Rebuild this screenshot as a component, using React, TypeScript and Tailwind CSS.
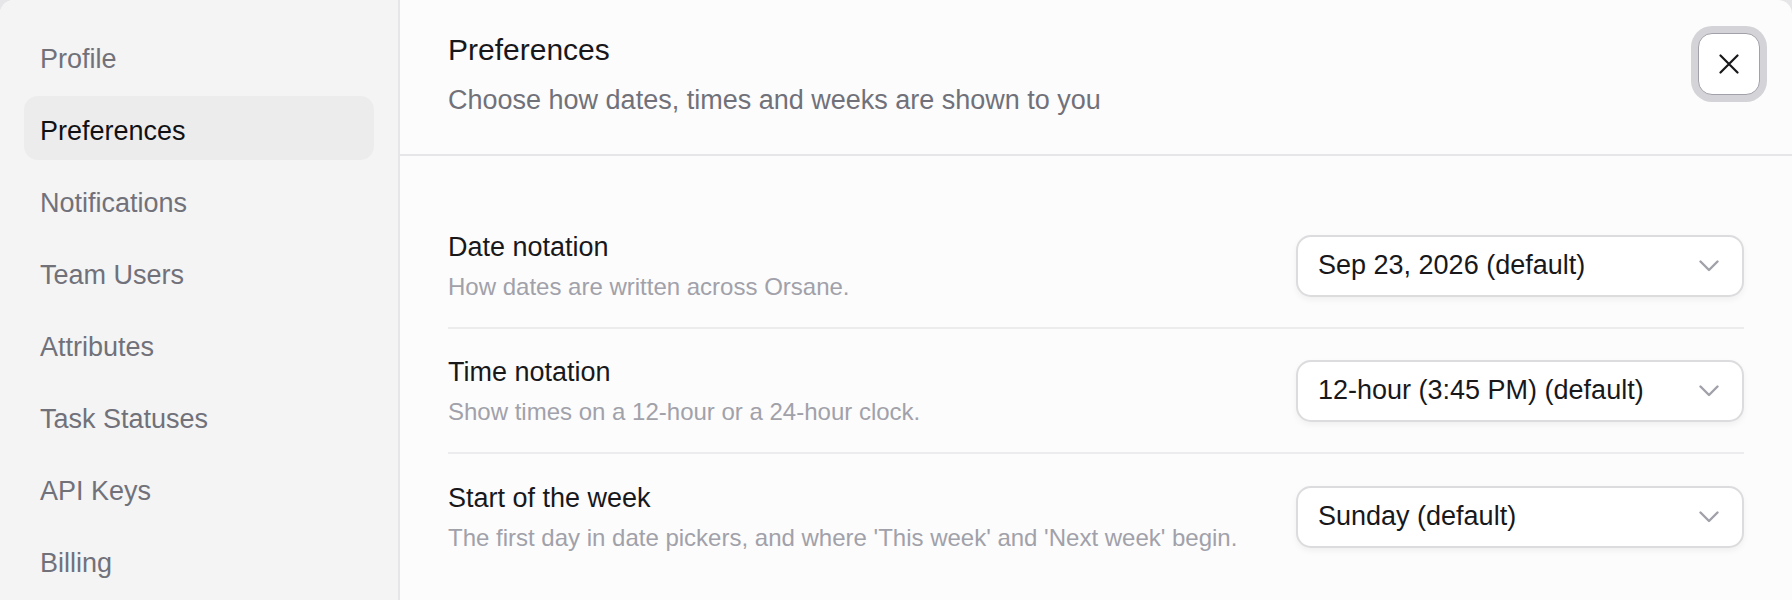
import { useState } from "react";

const navItems = [
  "Profile",
  "Preferences",
  "Notifications",
  "Team Users",
  "Attributes",
  "Task Statuses",
  "API Keys",
  "Billing",
];

const settings = [
  {
    title: "Date notation",
    description: "How dates are written across Orsane.",
    value: "Sep 23, 2026 (default)",
  },
  {
    title: "Time notation",
    description: "Show times on a 12-hour or a 24-hour clock.",
    value: "12-hour (3:45 PM) (default)",
  },
  {
    title: "Start of the week",
    description:
      "The first day in date pickers, and where 'This week' and 'Next week' begin.",
    value: "Sunday (default)",
  },
];

const Chevron = () => (
  <svg width="20" height="12" viewBox="0 0 20 12" fill="none">
    <polyline
      points="1.5,1.5 10,10 18.5,1.5"
      stroke="#a1a1aa"
      strokeWidth="2.4"
      strokeLinecap="round"
      strokeLinejoin="round"
    />
  </svg>
);

const CloseIcon = () => (
  <svg width="20" height="20" viewBox="0 0 20 20" fill="none">
    <path
      d="M1.5 1.5 18.5 18.5M18.5 1.5 1.5 18.5"
      stroke="#18181b"
      strokeWidth="2.2"
      strokeLinecap="round"
    />
  </svg>
);

const SelectBox = ({ value }: { value: string }) => (
  <button
    type="button"
    className="flex h-[62px] w-[448px] shrink-0 items-center justify-between rounded-[15px] border-2 border-[#dcdcdf] bg-white pl-5 pr-[23px] text-[27px] text-[#18181b] shadow-[0_3px_6px_rgba(0,0,0,0.05)]"
  >
    <span>{value}</span>
    <Chevron />
  </button>
);

export default function App() {
  const [active, setActive] = useState("Preferences");

  return (
    <div className="min-h-screen bg-[#e6e6e8] font-['Liberation_Sans',Arial,sans-serif]">
      <div className="flex h-[600px] overflow-hidden rounded-t-[14px] bg-[#fcfcfc]">
        {/* Settings navigation */}
        <aside className="flex w-[400px] shrink-0 flex-col gap-2 border-r-2 border-[#e6e6e8] bg-[#f4f4f5] px-6 pt-6">
          {navItems.map((item) => (
            <button
              key={item}
              type="button"
              onClick={() => setActive(item)}
              className={
                item === active
                  ? "flex h-16 shrink-0 items-center rounded-[14px] bg-[#ececed] px-4 pt-[6px] text-left text-[27px] text-[#111113]"
                  : "flex h-16 shrink-0 items-center rounded-[14px] px-4 pt-[6px] text-left text-[27px] text-[#71717a]"
              }
            >
              {item}
            </button>
          ))}
        </aside>

        <main className="flex min-w-0 flex-1 flex-col">
          <header className="flex h-[156px] shrink-0 items-start justify-between border-b-2 border-[#e6e6e8] pl-12 pr-8 pt-8">
            <div>
              <h2 className="text-[30px] leading-9 text-[#18181b]">Preferences</h2>
              <p className="mt-3 text-[27px] leading-10 text-[#71717a]">
                Choose how dates, times and weeks are shown to you
              </p>
            </div>
            <button
              type="button"
              className="mt-px flex size-[62px] items-center justify-center rounded-[14px] border-[1.5px] border-[#a1a1aa] bg-white ring-[7px] ring-[#d4d4d8]"
            >
              <CloseIcon />
            </button>
          </header>

          <div className="flex flex-col px-12 pt-12">
            {settings.map((s, i) => (
              <div
                key={s.title}
                className={
                  i < settings.length - 1
                    ? "flex h-[125px] items-center justify-between border-b-2 border-[#ececee]"
                    : "flex h-[125px] items-center justify-between"
                }
              >
                <div>
                  <div className="text-[27px] leading-10 text-[#18181b]">{s.title}</div>
                  <div className="mt-0.5 text-[24px] leading-9 text-[#a1a1aa]">
                    {s.description}
                  </div>
                </div>
                <SelectBox value={s.value} />
              </div>
            ))}
          </div>
        </main>
      </div>
    </div>
  );
}
